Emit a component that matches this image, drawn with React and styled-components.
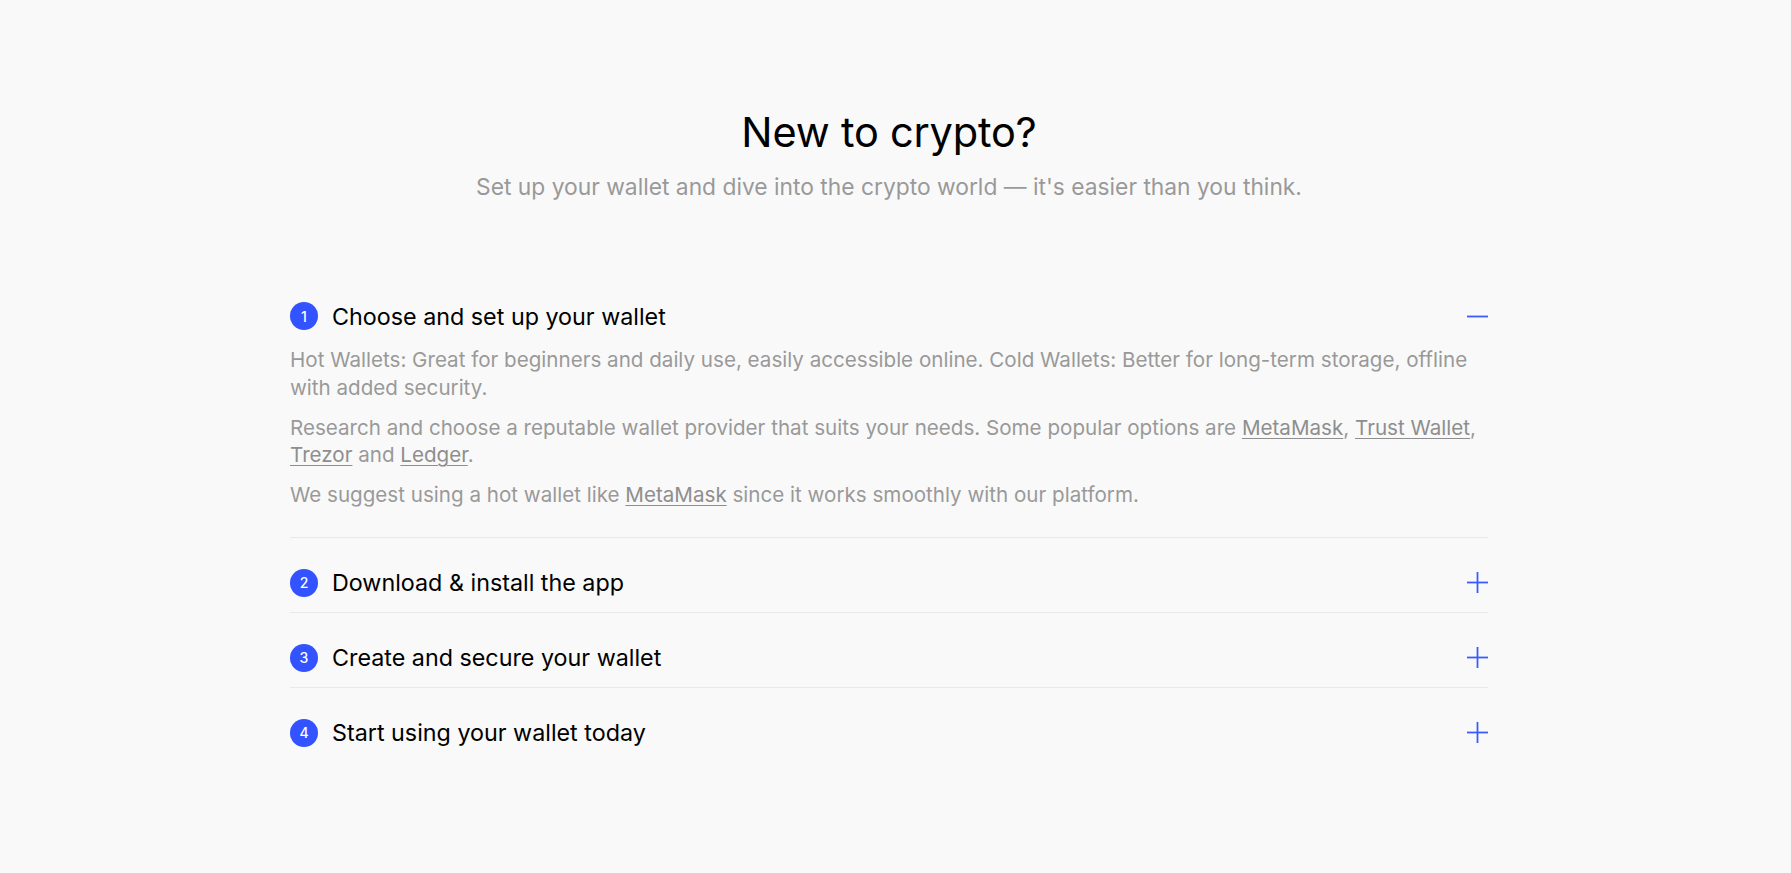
import React, { useState } from 'react';
import styled, { createGlobalStyle } from 'styled-components';

const GlobalStyle = createGlobalStyle`
  html, body {
    margin: 0;
    padding: 0;
    background: #f9f9f9;
  }
  body {
    font-family: Inter, "Noto Sans", "Liberation Sans", sans-serif;
    -webkit-font-smoothing: antialiased;
  }
`;

const Page = styled.main`
  min-height: 873px;
  box-sizing: border-box;
  padding: 108px 13px 80px 0;
  display: flex;
  flex-direction: column;
  align-items: center;
`;

const Title = styled.h1`
  margin: 0;
  font-size: 41.5px;
  line-height: 48px;
  font-weight: 400;
  color: #000;
  letter-spacing: -0.2px;
`;

const Subtitle = styled.p`
  margin: 15px 0 0;
  font-size: 22.8px;
  line-height: 31px;
  color: #999;
`;

const List = styled.div`
  width: 1198px;
  margin-top: 69px;
`;

const Item = styled.section`
  padding: 31px 0 0;
  border-bottom: ${p => (p.$last ? 'none' : '1px solid #e9e9e9')};
`;

const Header = styled.button`
  all: unset;
  box-sizing: border-box;
  width: 100%;
  height: 28px;
  display: flex;
  align-items: center;
  gap: 14px;
  cursor: pointer;
`;

const Num = styled.span`
  flex: none;
  width: 28px;
  height: 28px;
  border-radius: 50%;
  background: #3253ff;
  color: #fff;
  font-size: 14px;
  font-weight: 500;
  display: flex;
  align-items: center;
  justify-content: center;
`;

const Label = styled.span`
  flex: 1;
  font-size: 23.3px;
  color: #000;
  font-weight: 400;
`;

const Toggle = styled.span`
  flex: none;
  width: 21px;
  height: 21px;
  display: flex;
  color: #3a5bff;
`;

const Body = styled.div`
  padding: 16px 0 15.5px;
`;

const Spacer = styled.div`
  height: 15px;
`;

const Text = styled.p`
  margin: 0 0 12.5px;
  font-size: 20.6px;
  line-height: 27.5px;
  color: #999;
`;

const A = styled.a`
  color: #8e8e8e;
  text-decoration: underline;
  text-underline-offset: 3px;
  text-decoration-thickness: 1px;
`;

const Icon = ({ open }) => (
  <svg width="21" height="21" viewBox="0 0 21 21" fill="none" stroke="currentColor" strokeWidth="1.8">
    <line x1="0" y1="10.5" x2="21" y2="10.5" />
    {!open && <line x1="10.5" y1="0" x2="10.5" y2="21" />}
  </svg>
);

const steps = [
  {
    title: 'Choose and set up your wallet',
    body: (
      <>
        <Text>
          Hot Wallets: Great for beginners and daily use, easily accessible online. Cold Wallets: Better for long-term storage, offline with added security.
        </Text>
        <Text>
          Research and choose a reputable wallet provider that suits your needs. Some popular options are <A href="#">MetaMask</A>, <A href="#">Trust Wallet</A>, <A href="#">Trezor</A> and <A href="#">Ledger</A>.
        </Text>
        <Text>
          We suggest using a hot wallet like <A href="#">MetaMask</A> since it works smoothly with our platform.
        </Text>
      </>
    ),
  },
  { title: 'Download & install the app', body: null },
  { title: 'Create and secure your wallet', body: null },
  { title: 'Start using your wallet today', body: null },
];

export default function App() {
  const [open, setOpen] = useState(0);

  return (
    <>
      <GlobalStyle />
      <Page>
        <Title>New to crypto?</Title>
        <Subtitle>Set up your wallet and dive into the crypto world — it's easier than you think.</Subtitle>
        <List>
          {steps.map((s, i) => (
            <Item key={i} $last={i === steps.length - 1}>
              <Header onClick={() => setOpen(open === i ? -1 : i)}>
                <Num>{i + 1}</Num>
                <Label>{s.title}</Label>
                <Toggle>
                  <Icon open={open === i} />
                </Toggle>
              </Header>
              {open === i && s.body ? <Body>{s.body}</Body> : <Spacer />}
            </Item>
          ))}
        </List>
      </Page>
    </>
  );
}
